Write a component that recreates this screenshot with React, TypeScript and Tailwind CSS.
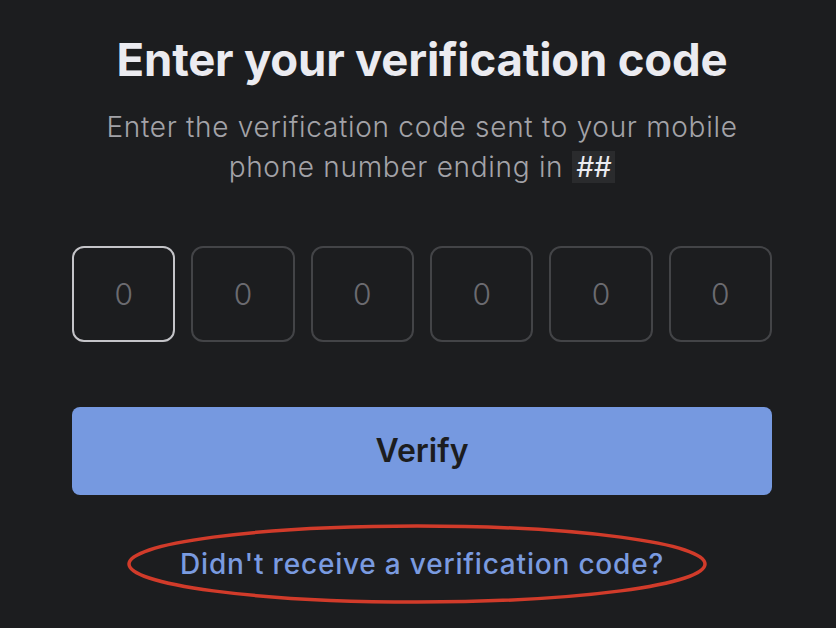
import React from "react";

export default function App() {
  const boxes = [0, 1, 2, 3, 4, 5];
  return (
    <div className="w-[836px] h-[628px] bg-[#1c1d1f] overflow-hidden flex flex-col items-center pl-[8px]" style={{ fontFamily: "Inter, 'Noto Sans', sans-serif" }}>
      <h1 className="mt-[30px] text-[45.5px] leading-[60px] font-bold text-[#ebebf0] tracking-[-0.2px]">
        Enter your verification code
      </h1>
      <p className="mt-[17px] text-center text-[28px] leading-[40px] font-light tracking-[0.7px] text-[#a3a3a8]">
        Enter the verification code sent to your mobile
        <br />
        phone number ending in{" "}
        <span className="inline-block bg-[#2a2b2d] px-[4px] leading-[32px] tracking-normal text-[#ebebf0] font-normal italic">##</span>
      </p>
      <div className="mt-[59px] flex gap-[16px] w-[700px]">
        {boxes.map((i) => (
          <div
            key={i}
            className={`flex-1 h-[96px] rounded-[12px] border-2 flex items-center justify-center text-[30px] font-light text-[#6b6b70] ${i === 0 ? "border-[#c4c4c8]" : "border-[#434447]"}`}
          >
            0
          </div>
        ))}
      </div>
      <button className="mt-[65px] w-[700px] h-[88px] rounded-[8px] bg-[#7699e0] text-[#1c1d1f] text-[32px] font-semibold">
        Verify
      </button>
      <div className="relative mt-[29px] w-[580px] h-[80px] flex items-center justify-center">
        <svg className="absolute top-0 left-[-5px]" width="580" height="80" viewBox="0 0 580 80">
          <ellipse cx="290" cy="40" rx="288" ry="38" fill="none" stroke="#d13b2a" strokeWidth="3.5" />
        </svg>
        <span className="relative whitespace-nowrap text-[28px] font-medium tracking-[0.8px] text-[#7a9be0]">
          Didn't receive a verification code?
        </span>
      </div>
    </div>
  );
}
